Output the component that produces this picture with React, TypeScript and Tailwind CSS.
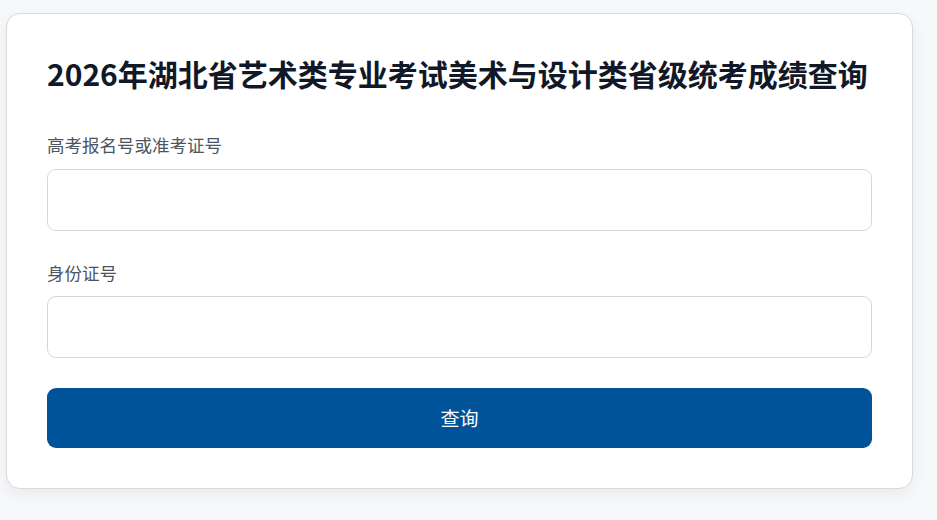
export default function App() {
  return (
    <div className="min-h-[520px] bg-[#f7f8fa] pt-[13px] pl-[6px] font-['Noto_Sans_CJK_SC','Noto_Sans',sans-serif]">
      <div className="w-[907px] rounded-[14px] border border-[#d6d9de] bg-white px-10 pt-10 pb-10 shadow-[0_6px_16px_rgba(0,0,0,0.06)]">
        <h1 className="text-[30px] leading-[38px] font-bold text-[#111827]">
          2026年湖北省艺术类专业考试美术与设计类省级统考成绩查询
        </h1>

        <form className="mt-[41px]" onSubmit={(e) => e.preventDefault()}>
          <label className="block text-[17.5px] leading-6 text-[#4b5563]">高考报名号或准考证号</label>
          <input
            type="text"
            className="mt-[12px] block h-[62px] w-full rounded-[9px] border border-[#d4d7dc] px-4 text-[17px] outline-none"
          />

          <label className="mt-[30px] block text-[17.5px] leading-6 text-[#4b5563]">身份证号</label>
          <input
            type="text"
            className="mt-[11px] block h-[62px] w-full rounded-[9px] border border-[#d4d7dc] px-4 text-[17px] outline-none"
          />

          <button
            type="submit"
            className="mt-[30px] block h-[60px] w-full rounded-[9px] bg-[#005398] text-[19px] text-white"
          >
            查询
          </button>
        </form>
      </div>
    </div>
  )
}
